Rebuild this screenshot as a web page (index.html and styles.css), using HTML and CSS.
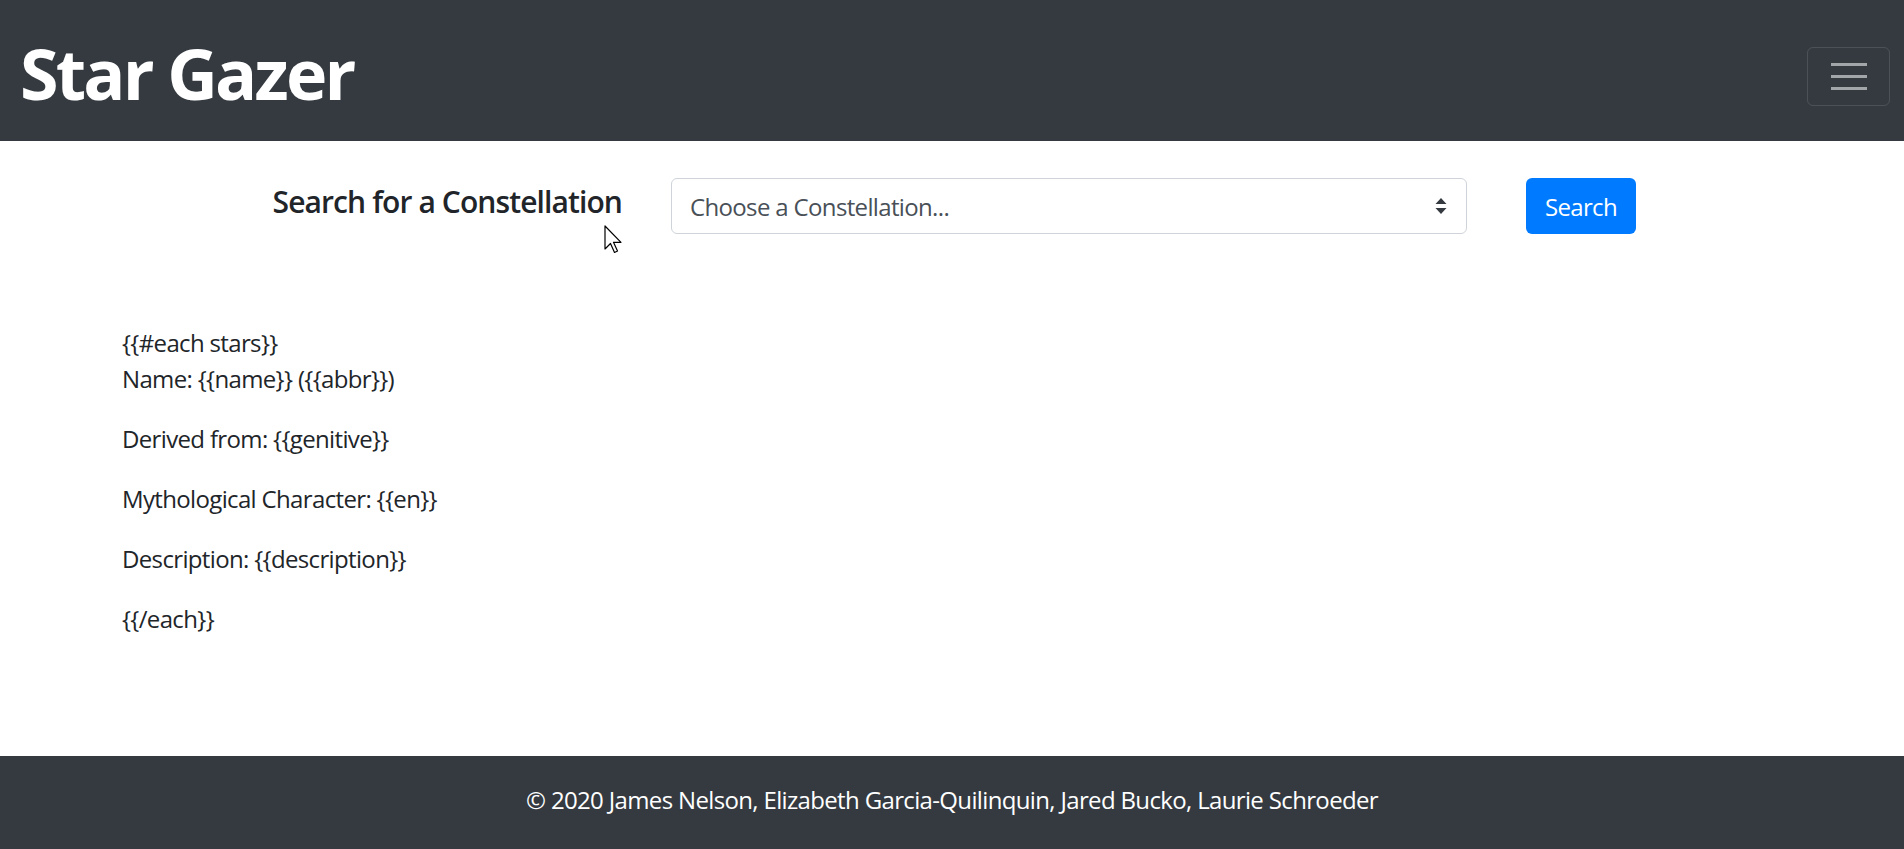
FILE: index.html
```html
<!DOCTYPE html>
<html lang="en">
<head>
<meta charset="utf-8">
<title>Star Gazer</title>
<link rel="stylesheet" href="styles.css">
</head>
<body>
<nav class="navbar">
  <a class="brand" href="#">Star Gazer</a>
  <button class="toggler" type="button" aria-label="Toggle navigation">
    <span class="bar"></span><span class="bar"></span><span class="bar"></span>
  </button>
</nav>
<main class="main">
  <form class="search-row">
    <label class="search-label" for="constellation">Search for a Constellation</label>
    <div class="select">
      <span class="select-text">Choose a Constellation...</span>
      <svg class="select-arrow" width="12" height="16" viewBox="0 0 12 16"><path d="M6 0 L11.5 6 H0.5 Z M6 16 L11.5 10 H0.5 Z" fill="#343a40"/></svg>
    </div>
    <button class="btn" type="button">Search</button>
  </form>
  <section class="results">
    <p>{{#each stars}}<br>Name: {{name}} ({{abbr}})</p>
    <p>Derived from: {{genitive}}</p>
    <p>Mythological Character: {{en}}</p>
    <p>Description: {{description}}</p>
    <p>{{/each}}</p>
  </section>
</main>
<footer class="footer">© 2020 James Nelson, Elizabeth Garcia-Quilinquin, Jared Bucko, Laurie Schroeder</footer>
<svg class="cursor" width="20" height="30" viewBox="0 0 20 30"><path d="M1 1 L1 24 L6.5 18.5 L10.5 27.5 L13.5 26 L9.5 17.3 L17 17.3 Z" fill="#fff" stroke="#000" stroke-width="1.2" stroke-linejoin="round"/></svg>
</body>
</html>
```
FILE: styles.css
```css
* { box-sizing: border-box; }
html, body { margin: 0; padding: 0; }
body {
  font-family: "Segoe UI", "Open Sans", "Noto Sans", sans-serif;
  font-size: 24px;
  line-height: 1.5;
  letter-spacing: -0.65px;
  color: #212529;
  background: #fff;
  min-height: 100vh;
  display: flex;
  flex-direction: column;
  position: relative;
}
.navbar {
  height: 141px;
  background: #343a40;
  display: flex;
  align-items: center;
  justify-content: space-between;
  padding: 0 14px 0 20px;
}
.brand {
  color: #fff;
  font-size: 70px;
  font-weight: 700;
  line-height: 1;
  letter-spacing: -2.8px;
  text-decoration: none;
  margin-top: 4px;
}
.toggler {
  width: 83px;
  height: 59px;
  border: 1.5px solid rgba(255,255,255,0.12);
  border-radius: 6px;
  background: transparent;
  display: flex;
  flex-direction: column;
  align-items: center;
  justify-content: center;
  gap: 9px;
  padding: 0;
  margin-top: 12px;
}
.bar {
  display: block;
  width: 36px;
  height: 3px;
  background: rgba(255,255,255,0.55);
}
.main { flex: 1; }
.search-row {
  display: flex;
  align-items: center;
  margin: 37px 0 0 0;
  padding-left: 119px;
}
.search-label {
  width: 503px;
  text-align: right;
  font-size: 30px;
  font-weight: 600;
  line-height: 1.2;
  letter-spacing: -0.9px;
  margin-right: 49px;
  margin-top: -8px;
}
.select {
  width: 796px;
  height: 56px;
  border: 1.5px solid #ced4da;
  border-radius: 6px;
  display: flex;
  align-items: center;
  justify-content: space-between;
  padding: 2px 19px 0 18px;
  color: #495057;
}
.select-arrow { display: block; margin-top: -2px; }
.btn {
  margin-left: 59px;
  width: 110px;
  height: 56px;
  background: #007bff;
  color: #fff;
  border: none;
  border-radius: 6px;
  font-family: inherit;
  font-size: 24px;
  letter-spacing: -0.65px;
  line-height: 1.5;
  padding: 2px 0 0 0;
}
.results {
  padding-left: 122px;
  margin-top: 91px;
}
.results p { margin: 0 0 24px 0; }
.footer {
  height: 93px;
  background: #343a40;
  color: #fff;
  display: flex;
  align-items: center;
  justify-content: center;
  padding-bottom: 6px;
}
.cursor {
  position: absolute;
  left: 604px;
  top: 225px;
}
```
